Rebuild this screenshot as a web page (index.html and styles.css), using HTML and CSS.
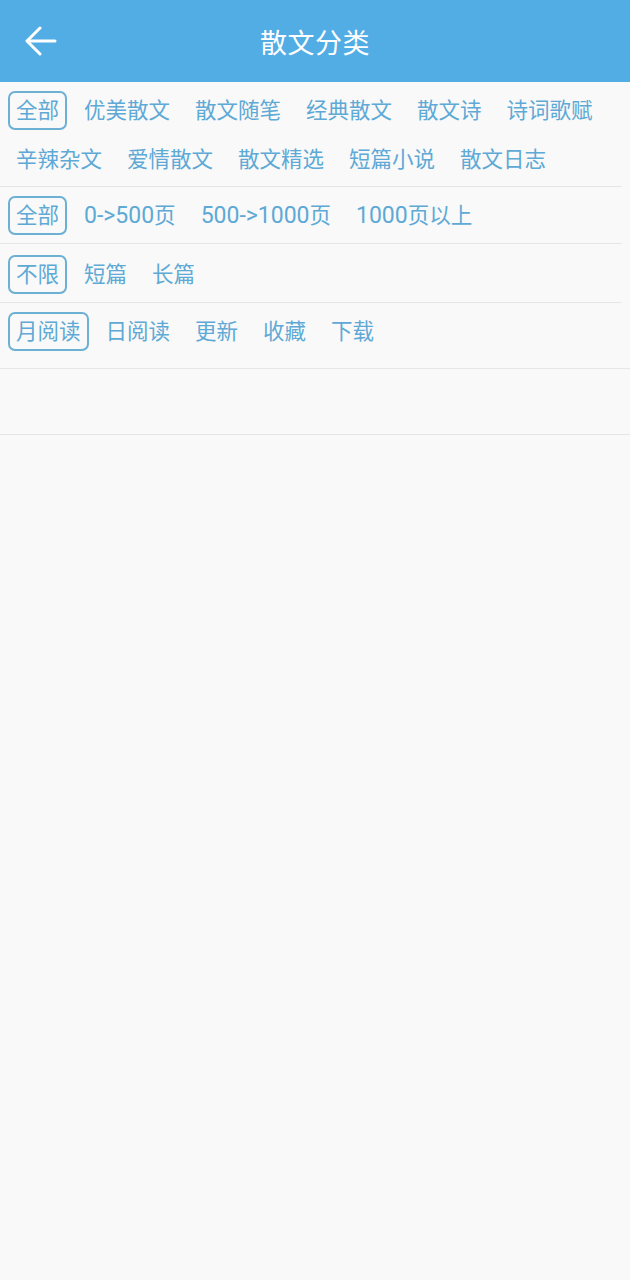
FILE: index.html
```html
<!DOCTYPE html>
<html lang="zh-CN">
<head>
<meta charset="utf-8">
<title>散文分类</title>
<link rel="stylesheet" href="styles.css">
</head>
<body>
<header class="topbar">
  <button class="back" aria-label="返回">
    <svg width="32" height="30" viewBox="0 0 32 30" fill="none" stroke="#fff" stroke-width="3" stroke-linecap="round" stroke-linejoin="round">
      <path d="M30 15H3"/>
      <path d="M15 2L2 15l13 13"/>
    </svg>
  </button>
  <h1 class="title">散文分类</h1>
</header>

<main class="filters">
  <section class="group group-type">
    <span class="chip active">全部</span>
    <span class="chip">优美散文</span>
    <span class="chip">散文随笔</span>
    <span class="chip">经典散文</span>
    <span class="chip">散文诗</span>
    <span class="chip">诗词歌赋</span>
    <span class="chip">辛辣杂文</span>
    <span class="chip">爱情散文</span>
    <span class="chip">散文精选</span>
    <span class="chip">短篇小说</span>
    <span class="chip">散文日志</span>
  </section>
  <section class="group">
    <span class="chip active">全部</span>
    <span class="chip"><span class="num">0-&gt;500</span>页</span>
    <span class="chip"><span class="num">500-&gt;1000</span>页</span>
    <span class="chip"><span class="num">1000</span>页以上</span>
  </section>
  <section class="group group-length">
    <span class="chip active">不限</span>
    <span class="chip">短篇</span>
    <span class="chip">长篇</span>
  </section>
  <section class="group group-sort">
    <span class="chip active">月阅读</span>
    <span class="chip">日阅读</span>
    <span class="chip">更新</span>
    <span class="chip">收藏</span>
    <span class="chip">下载</span>
  </section>
  <div class="list-empty"></div>
</main>
</body>
</html>
```

FILE: styles.css
```css
* { box-sizing: border-box; }

html, body {
  margin: 0;
  padding: 0;
  background: #f9f9f9;
  font-family: "Roboto", "Noto Sans CJK SC", sans-serif;
}

.topbar {
  height: 82px;
  background: #53ade5;
  display: flex;
  align-items: center;
  justify-content: center;
  position: relative;
}

.back {
  position: absolute;
  left: 25px;
  top: 26px;
  padding: 0;
  border: 0;
  background: none;
  display: flex;
}

.title {
  margin: 0;
  color: #fff;
  font-size: 27px;
  font-weight: 400;
  letter-spacing: 0.5px;
}

.group {
  display: flex;
  flex-wrap: wrap;
  row-gap: 10px;
  column-gap: 9px;
  padding: 9px 0 8px 8px;
  margin-right: 8px;
  border-bottom: 1px solid #e6e6e6;
}

.group-type {
  padding-top: 9px;
  padding-bottom: 7px;
}

.group-length {
  padding-top: 11px;
}

.group-sort {
  margin-right: 0;
  padding-bottom: 17px;
}

.chip {
  display: inline-block;
  font-size: 21.5px;
  line-height: 25px;
  height: 39px;
  padding: 5px 6px;
  border: 2px solid transparent;
  border-radius: 7px;
  color: #5ea9d5;
  white-space: nowrap;
}

.chip .num {
  font-size: 23px;
}

.chip.active {
  border-color: #6cb0d4;
}

.list-empty {
  height: 66px;
  border-bottom: 1px solid #e6e6e6;
}
```
